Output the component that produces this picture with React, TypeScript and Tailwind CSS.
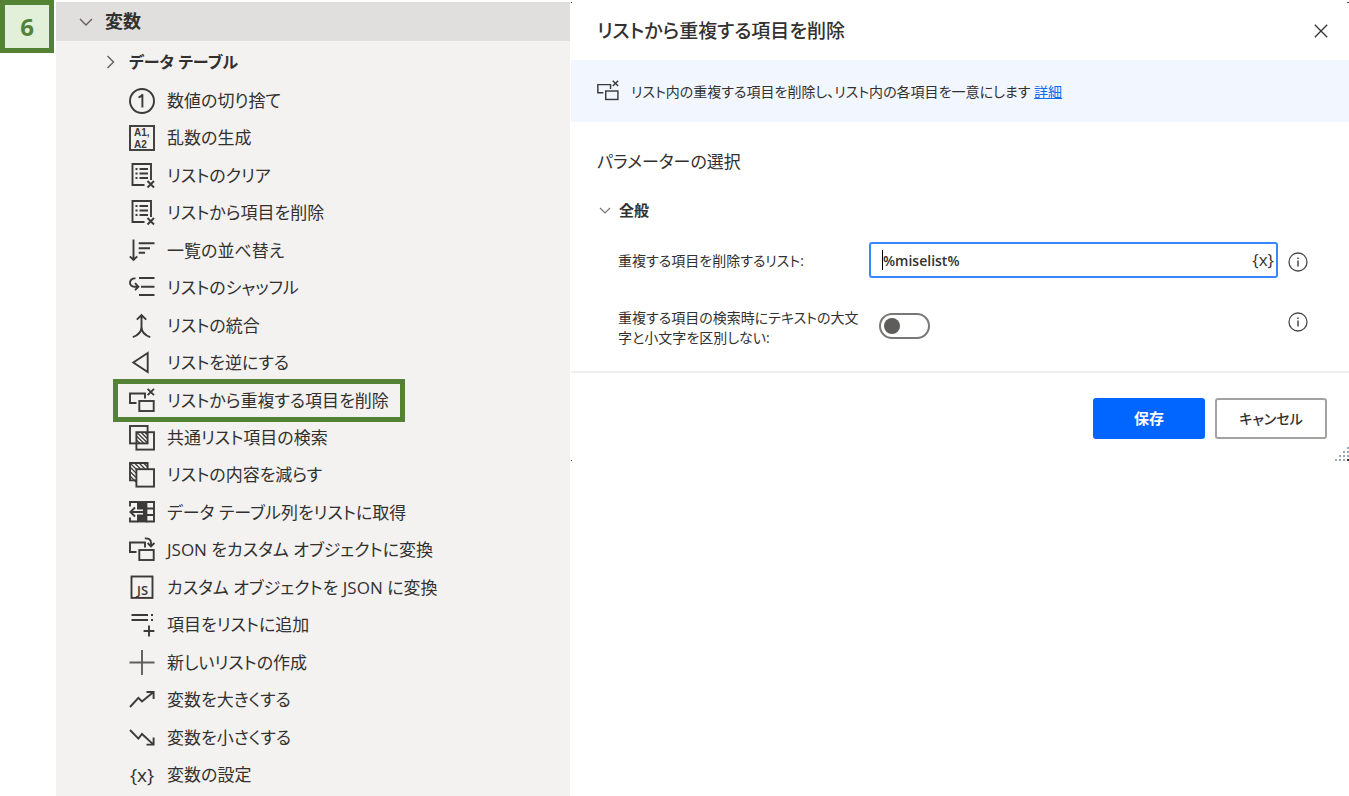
import type { ReactNode } from "react";

function Glyph({ children }: { children: ReactNode }) {
  return (
    <svg
      viewBox="0 0 26 26"
      aria-hidden="true"
      className="size-[26px] shrink-0 text-[#3b3a39]"
      fill="none"
      stroke="currentColor"
      strokeWidth="1.9"
    >
      {children}
    </svg>
  );
}

const truncateIcon = (
  <Glyph>
    <circle cx="13" cy="13" r="12" />
    <path d="M9.5 9.2C11.5 9 12.8 8 13.4 6.3V19.5" />
  </Glyph>
);

const randomIcon = (
  <Glyph>
    <rect x="1" y="1" width="24" height="24" />
    <g fill="currentColor" stroke="none" className="font-['Liberation_Sans',sans-serif] text-[10px] font-bold">
      <text x="5" y="11">A1,</text>
      <text x="5" y="23">A2</text>
    </g>
  </Glyph>
);

const listRemoveIcon = (
  <Glyph>
    <path d="M15.5 22H3.5V1H22V17" />
    <path d="M10.5 6H19M10.5 10.5H19M10.5 15H19M6.5 6H8.5M6.5 10.5H8.5M6.5 15H8.5" />
    <path d="M18.5 18L25 24.5M25 18L18.5 24.5" />
  </Glyph>
);

const sortIcon = (
  <Glyph>
    <path d="M4.5 1.5V22M.8 18.4L4.5 22L8.2 18.4" />
    <path d="M9.7 5.3H25.5M9.7 10.3H21M9.7 14.7H16" />
  </Glyph>
);

const shuffleIcon = (
  <Glyph>
    <path d="M10 3H25.5M12 11.7H25.5M10 20H25.5" />
    <path d="M6.5 3.4C-.6 2.8-.6 11.7 5.4 11.7H9M6 8.2L9.4 11.7L6 15.2" />
  </Glyph>
);

const mergeIcon = (
  <Glyph>
    <path d="M12.5 2V14C12.5 19 9.5 22 3.8 24.2M12.5 14C12.5 19 15.5 22 21.2 24.2M7.8 6.6L12.5 2L17.2 6.6" />
  </Glyph>
);

const reverseIcon = (
  <Glyph>
    <path d="M4.3 12.5L18.7 3V22Z" />
  </Glyph>
);

const duplicateIcon = (
  <Glyph>
    <path d="M7.5 15H1V5.5H16V10.5" />
    <rect x="10.3" y="13" width="14.4" height="10" />
    <path d="M18.6 .8L25 7.2M25 .8L18.6 7.2" />
  </Glyph>
);

const commonIcon = (
  <Glyph>
    <rect x="1" y="1" width="17.6" height="17.4" />
    <rect x="7.4" y="7.2" width="17.6" height="17.4" />
    <path d="M7.4 15L11 18.4M7.4 11L15 18.4M8 7.6L18.6 18M12 7.2L18.6 14M16 7.2L18.6 10" strokeWidth="1.3" />
  </Glyph>
);

const reduceIcon = (
  <Glyph>
    <path d="M7 18.4H1V1H18.6V7" />
    <path d="M1 14L7 20M1 9.5L7 15.5M1 5L7.4 11.4M1 1L7.4 7.4M5.5 1L12 7.4M10 1L16 7M14.5 1L18.6 5" strokeWidth="1.3" />
    <rect x="7.4" y="7.2" width="17.6" height="17.4" fill="#f3f2f1" />
  </Glyph>
);

const columnIcon = (
  <Glyph>
    <path d="M8.7 2H1V6.5M1 17.5V21.5H8.7M17 2H25V21.5H17M17 8.5H25M17 15H25" />
    <rect x="9" y="2" width="8.4" height="19.5" fill="currentColor" />
    <path d="M2 12H14" stroke="#f3f2f1" strokeWidth="5" />
    <path d="M14 12H1.4M6 7.5L1.4 12L6 16.5" />
  </Glyph>
);

const fromJsonIcon = (
  <Glyph>
    <path d="M7.5 15H1V5.5H16V10.5" />
    <rect x="10.3" y="13" width="14.4" height="10" />
    <path d="M15.8 1.4C19.8 1.2 22 2.6 22 6V9M18.6 6L22 9.4L25.4 6" />
  </Glyph>
);

const toJsonIcon = (
  <Glyph>
    <rect x="2.5" y="1.5" width="21" height="21.4" />
    <text
      x="8"
      y="20"
      fill="currentColor"
      stroke="none"
      className="font-['Open_Sans',sans-serif] text-[13px] font-semibold"
    >
      JS
    </text>
  </Glyph>
);

const addItemIcon = (
  <Glyph>
    <path d="M2.5 3H19M2.5 8H19M22 3H24M22 8H24" />
    <path d="M20 13.6V24.4M14.6 19H25.4" />
  </Glyph>
);

const createIcon = (
  <Glyph>
    <path d="M13 0V25M.5 12.5H25.5" stroke="#605e5c" />
  </Glyph>
);

const increaseIcon = (
  <Glyph>
    <path d="M1 20L9.4 10.8L13 14.4L24.2 5.2M17.5 5H24.6V12" />
  </Glyph>
);

const decreaseIcon = (
  <Glyph>
    <path d="M1 5L9.4 13.6L13 9L24.2 19.4M17.5 19.6H24.6V12.6" />
  </Glyph>
);

const setVariableIcon = (
  <span
    aria-hidden="true"
    className="flex w-[26px] shrink-0 justify-center font-['Open_Sans',sans-serif] text-[19px] leading-[26px]"
  >
    {"{x}"}
  </span>
);

interface Action {
  label: string;
  icon: ReactNode;
  marked?: boolean;
}

const actions: Action[] = [
  { label: "数値の切り捨て", icon: truncateIcon },
  { label: "乱数の生成", icon: randomIcon },
  { label: "リストのクリア", icon: listRemoveIcon },
  { label: "リストから項目を削除", icon: listRemoveIcon },
  { label: "一覧の並べ替え", icon: sortIcon },
  { label: "リストのシャッフル", icon: shuffleIcon },
  { label: "リストの統合", icon: mergeIcon },
  { label: "リストを逆にする", icon: reverseIcon },
  { label: "リストから重複する項目を削除", icon: duplicateIcon, marked: true },
  { label: "共通リスト項目の検索", icon: commonIcon },
  { label: "リストの内容を減らす", icon: reduceIcon },
  { label: "データ テーブル列をリストに取得", icon: columnIcon },
  { label: "JSON をカスタム オブジェクトに変換", icon: fromJsonIcon },
  { label: "カスタム オブジェクトを JSON に変換", icon: toJsonIcon },
  { label: "項目をリストに追加", icon: addItemIcon },
  { label: "新しいリストの作成", icon: createIcon },
  { label: "変数を大きくする", icon: increaseIcon },
  { label: "変数を小さくする", icon: decreaseIcon },
  { label: "変数の設定", icon: setVariableIcon },
];

function InfoButton({ label }: { label: string }) {
  return (
    <button type="button" aria-label={label} className="size-5 shrink-0">
      <svg viewBox="0 0 20 20" className="size-5" fill="none" stroke="#4a4948" strokeWidth="1.3">
        <circle cx="10" cy="10" r="9" />
        <path d="M10 8.5V14.5M10 5.5V7" strokeWidth="1.5" />
      </svg>
    </button>
  );
}

function ActionTree() {
  return (
    <nav className="flex flex-col pt-[2px]">
      <div className="flex flex-1 flex-col bg-[#f3f2f1] pb-[2px]">
        <button type="button" className="flex h-[39px] items-center gap-3 bg-[#e1dfdd] pl-[23px] text-[18px] font-bold">
          <svg viewBox="0 0 14 8" className="h-2 w-[14px]" fill="none" stroke="#605e5c" strokeWidth="1.4">
            <path d="M1 1L7 7L13 1" />
          </svg>
          変数
        </button>
        <button type="button" className="flex h-[41px] items-center gap-[14px] pl-[50px] text-[16px] font-bold">
          <svg viewBox="0 0 9 14" className="h-[14px] w-[9px]" fill="none" stroke="#605e5c" strokeWidth="1.4">
            <path d="M1.5 1L7.5 7L1.5 13" />
          </svg>
          データ テーブル
        </button>
        <ul className="grid flex-1 auto-rows-fr pl-[73px]">
          {actions.map((action) => (
            <li key={action.label} className="flex items-center">
              <button
                type="button"
                className="relative flex items-center gap-3 text-left text-[17px] leading-[26px] whitespace-nowrap"
              >
                {action.icon}
                {action.label}
                {action.marked && (
                  <span className="absolute -inset-x-4 -top-[9px] -bottom-2 border-5 border-[#548235]" />
                )}
              </button>
            </li>
          ))}
        </ul>
      </div>
    </nav>
  );
}

function ActionDialog() {
  return (
    <main className="pt-[2px] pl-px">
      <section role="dialog" aria-labelledby="dialog-title" className="relative">
        <header className="flex h-[58px] items-center justify-between pr-[21px] pl-[26px]">
          <h1 id="dialog-title" className="text-[19px] font-medium">
            リストから重複する項目を削除
          </h1>
          <button type="button" aria-label="閉じる">
            <svg viewBox="0 0 14 14" className="size-[14px]" fill="none" stroke="#323130" strokeWidth="1.3">
              <path d="M.8 .8L13.2 13.2M13.2 .8L.8 13.2" />
            </svg>
          </button>
        </header>

        <div className="flex h-[62px] items-center gap-3 bg-[#f1f6ff] pl-[26px] text-[14px]">
          <svg viewBox="0 0 26 26" className="size-[22px] shrink-0" fill="none" stroke="#3b3a39" strokeWidth="1.7">
            <path d="M7.5 15H1V5.5H16V10.5" />
            <rect x="10.3" y="13" width="14.4" height="10" />
            <path d="M18.6 .8L25 7.2M25 .8L18.6 7.2" />
          </svg>
          <p>
            リスト内の重複する項目を削除し、リスト内の各項目を一意にします{" "}
            <a href="#details" className="text-[#0f6cf5] underline">
              詳細
            </a>
          </p>
        </div>

        <div className="flex flex-col pt-6 pb-[23px]">
          <h2 className="pl-[26px] text-[17px] leading-8">パラメーターの選択</h2>
          <button type="button" className="mt-5 flex items-center gap-2 pl-7 text-[15px] leading-6 font-bold">
            <svg viewBox="0 0 12 7" className="h-[7px] w-3" fill="none" stroke="#7a7877" strokeWidth="1.2">
              <path d="M1 1L6 6L11 1" />
            </svg>
            全般
          </button>

          <div className="mt-5 flex items-center pr-[41px] pl-[47px]">
            <label htmlFor="target-list" className="w-[251px] shrink-0 text-[14px]">
              重複する項目を削除するリスト:
            </label>
            <div className="relative flex h-9 flex-1 items-center rounded-[3px] border-2 border-[#3a86ff] pr-[2px]">
              <input
                id="target-list"
                type="text"
                defaultValue="%miselist%"
                className="h-full w-full min-w-0 flex-1 bg-transparent pl-3 text-[14px] font-semibold outline-none"
              />
              <span aria-hidden="true" className="absolute top-[6px] left-[11px] h-5 w-px bg-black" />
              <button type="button" aria-label="変数の選択" className="font-['Open_Sans',sans-serif] text-[17px] leading-6">
                {"{x}"}
              </button>
            </div>
            <div className="ml-[10px] flex pt-[3px]">
              <InfoButton label="リストの説明" />
            </div>
          </div>

          <div className="mt-[30px] flex items-start pr-[41px] pl-[47px]">
            <label htmlFor="ignore-case" className="w-[246px] shrink-0 text-[14px] leading-5">
              重複する項目の検索時にテキストの大文字と小文字を区別しない:
            </label>
            <div className="mt-[5px] flex flex-1 pl-[15px]">
              <input
                id="ignore-case"
                type="checkbox"
                role="switch"
                className="flex h-[26px] w-[51px] appearance-none items-center rounded-full border-2 border-[#7a7877] bg-white pl-[3px] before:size-4 before:rounded-full before:bg-[#5f5d5b] before:content-['']"
              />
            </div>
            <div className="ml-[10px] flex pt-1">
              <InfoButton label="大文字と小文字の区別の説明" />
            </div>
          </div>
        </div>

        <footer className="flex justify-end gap-[10px] border-t-2 border-[#f0efee] pt-[25px] pr-[22px] pb-[22px]">
          <button type="button" className="h-[41px] w-28 rounded-[3px] bg-[#0066ff] text-[15px] font-bold text-white">
            保存
          </button>
          <button
            type="button"
            className="h-[41px] w-28 rounded-[3px] border-2 border-[#a3a2a0] bg-white text-[14px] font-medium"
          >
            キャンセル
          </button>
        </footer>

        <svg viewBox="0 0 14 14" aria-hidden="true" className="absolute right-0 bottom-0 size-[14px]" fill="#9aa6b8">
          <path d="M12 0h2v2h-2zM8 4h2v2H8zM12 4h2v2h-2zM4 8h2v2H4zM8 8h2v2H8zM12 8h2v2h-2zM0 12h2v2H0zM4 12h2v2H4zM8 12h2v2H8z" />
          <path d="M12 12h2v2h-2z" fill="#333" />
        </svg>
        <span aria-hidden="true" className="absolute top-0 left-0 size-px bg-[#444]" />
        <span aria-hidden="true" className="absolute top-0 right-0 h-px w-[2px] bg-[#444]" />
        <span aria-hidden="true" className="absolute bottom-0 left-0 size-px bg-[#444]" />
      </section>
    </main>
  );
}

export default function App() {
  return (
    <div className="grid min-h-screen grid-cols-[56px_514fr_779fr] bg-white font-['Open_Sans','Noto_Sans_CJK_JP',sans-serif] text-[#323130] [font-feature-settings:'palt']">
      <div>
        <div className="flex h-[53px] w-[54px] items-center justify-center border-5 border-[#548235] bg-[#e2f0d9] font-['Open_Sans',sans-serif] text-[24px] font-bold text-[#548235]">
          6
        </div>
      </div>
      <ActionTree />
      <ActionDialog />
    </div>
  );
}
